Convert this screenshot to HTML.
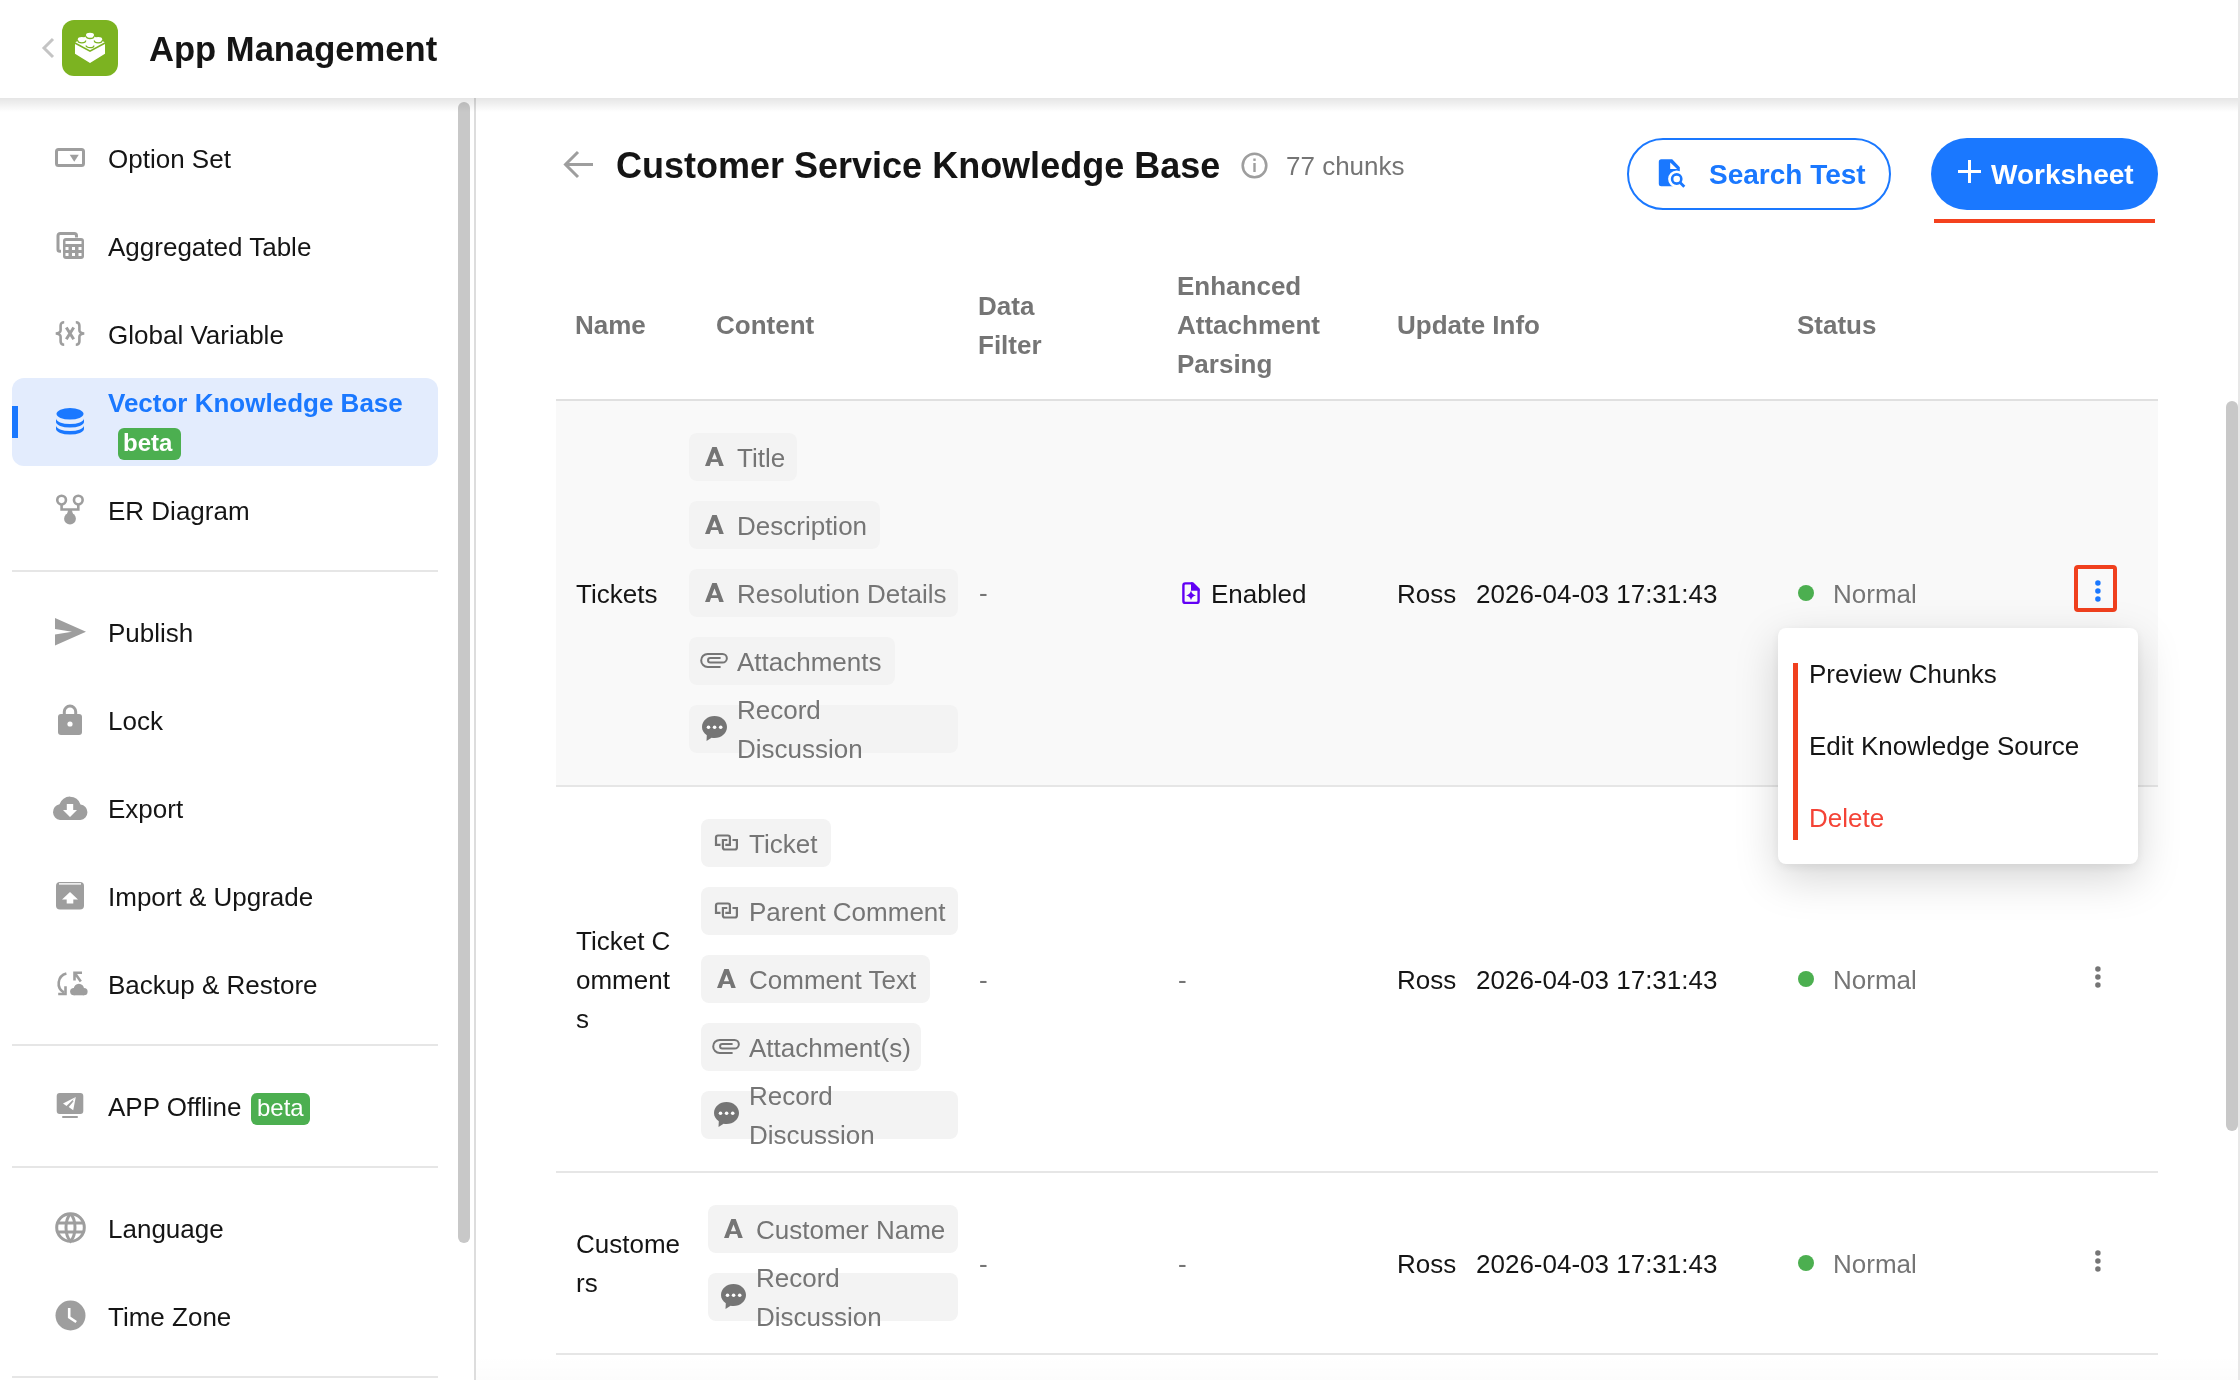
<!DOCTYPE html>
<html><head><meta charset="utf-8">
<style>
*{box-sizing:border-box;margin:0;padding:0}
body{will-change:transform}
html,body{width:2240px;height:1380px;overflow:hidden;background:#fff;font-family:"Liberation Sans",sans-serif;color:#151515}
.a{position:absolute}
.t{position:absolute;white-space:nowrap;line-height:1}
svg{position:absolute;overflow:visible}
</style></head><body>
<div class="a" style="left:0px;top:98px;width:2238px;height:14px;z-index:3;background:linear-gradient(rgba(0,0,0,0.1),rgba(0,0,0,0))"></div>
<svg style="left:40px;top:37px" width="16" height="22" viewBox="0 0 16 22"><path d="M13 2 L4 11 L13 20" fill="none" stroke="#c4c4c4" stroke-width="3"/></svg>
<div class="a" style="left:62px;top:20px;width:56px;height:56px;border-radius:12px;background:#7cb321"></div>
<svg style="left:70px;top:28px" width="40" height="40" viewBox="0 0 40 40"><path d="M5 16.1 L20 24.1 L35 16.1 V25.8 L20 35 L5 25.8 Z" fill="#fff"/><path d="M5.3 14.2 L20 6.2 L34.7 14.2 L20 22.2 Z" fill="#fff"/><ellipse cx="11.8" cy="11.4" rx="4" ry="2.3" fill="#fff"/><path d="M7.9 12.6 A3.9 2.3 0 0 0 15.700000000000001 12.6" fill="none" stroke="#7cb321" stroke-width="1.3"/><ellipse cx="28.2" cy="11.4" rx="4" ry="2.3" fill="#fff"/><path d="M24.3 12.6 A3.9 2.3 0 0 0 32.1 12.6" fill="none" stroke="#7cb321" stroke-width="1.3"/><ellipse cx="20" cy="16.2" rx="4" ry="2.3" fill="#fff"/><path d="M16.1 17.4 A3.9 2.3 0 0 0 23.9 17.4" fill="none" stroke="#7cb321" stroke-width="1.3"/><ellipse cx="20" cy="7" rx="4" ry="2.3" fill="#fff"/><path d="M16.1 8.2 A3.9 2.3 0 0 0 23.9 8.2" fill="none" stroke="#7cb321" stroke-width="1.3"/></svg>
<div class="t" style="left:149px;top:32px;font-size:34.6px;font-weight:700">App Management</div>
<div class="a" style="left:474px;top:98px;width:2px;height:1282px;background:#dddddd"></div>
<div class="a" style="left:458px;top:102px;width:12px;height:1141px;border-radius:6px;background:#c8c8c8"></div>
<div class="a" style="left:12px;top:570px;width:426px;height:2px;background:#e6e6e6"></div>
<div class="a" style="left:12px;top:1044px;width:426px;height:2px;background:#e6e6e6"></div>
<div class="a" style="left:12px;top:1166px;width:426px;height:2px;background:#e6e6e6"></div>
<div class="a" style="left:12px;top:1376px;width:426px;height:2px;background:#e6e6e6"></div>
<div class="a" style="left:12px;top:378px;width:426px;height:88px;border-radius:12px;background:#e3ecfd"></div>
<div class="a" style="left:12px;top:406px;width:6px;height:32px;background:#1a78ff"></div>
<div class="t" style="left:108px;top:146px;font-size:26px">Option Set</div>
<div class="t" style="left:108px;top:234px;font-size:26px">Aggregated Table</div>
<div class="t" style="left:108px;top:322px;font-size:26px">Global Variable</div>
<div class="t" style="left:108px;top:498px;font-size:26px">ER Diagram</div>
<div class="t" style="left:108px;top:620px;font-size:26px">Publish</div>
<div class="t" style="left:108px;top:708px;font-size:26px">Lock</div>
<div class="t" style="left:108px;top:796px;font-size:26px">Export</div>
<div class="t" style="left:108px;top:884px;font-size:26px">Import &amp; Upgrade</div>
<div class="t" style="left:108px;top:972px;font-size:26px">Backup &amp; Restore</div>
<div class="t" style="left:108px;top:1094px;font-size:26px">APP Offline</div>
<div class="t" style="left:108px;top:1216px;font-size:26px">Language</div>
<div class="t" style="left:108px;top:1304px;font-size:26px">Time Zone</div>
<div class="t" style="left:108px;top:390px;font-size:26px;font-weight:700;color:#1a78ff">Vector Knowledge Base</div>
<div class="a" style="left:118px;top:428px;width:63px;height:32px;border-radius:6px;background:#4caf50"></div>
<div class="t" style="left:123px;top:431px;font-size:24px;font-weight:700;color:#fff">beta</div>
<div class="a" style="left:251px;top:1093px;width:59px;height:32px;border-radius:6px;background:#4caf50"></div>
<div class="t" style="left:257px;top:1096px;font-size:24px;color:#fff">beta</div>
<svg style="left:55px;top:148px" width="30" height="19" viewBox="0 0 30 19"><rect x="1.5" y="1.5" width="27" height="16" rx="2" fill="none" stroke="#9e9e9e" stroke-width="3"/><path d="M14.7 6.8 H23.8 L19.25 13.7 Z" fill="#9e9e9e"/></svg>
<svg style="left:56px;top:232px" width="28" height="28" viewBox="0 0 28 28"><path d="M5 19.3 H3.7 A1.7 1.7 0 0 1 2 17.6 V3.7 A2.2 2.2 0 0 1 4.2 1.5 H18.3 A2.2 2.2 0 0 1 20.5 3.7 V5.5" fill="none" stroke="#9e9e9e" stroke-width="3"/><rect x="7" y="6" width="21" height="21" rx="3" fill="#9e9e9e"/><g fill="#fff"><rect x="9.5" y="9" width="16" height="3"/><rect x="9.5" y="15" width="3" height="3"/><rect x="16" y="15" width="3" height="3"/><rect x="22.5" y="15" width="3" height="3"/><rect x="9.5" y="21" width="3" height="3"/><rect x="16" y="21" width="3" height="3"/><rect x="22.5" y="21" width="3" height="3"/></g></svg>
<svg style="left:54px;top:320px" width="32" height="28" viewBox="0 0 32 28"><g fill="none" stroke="#9e9e9e" stroke-width="2.6"><path d="M10.2 2.3 C7.8 2.3 6.6 3.5 6.6 5.8 V10.3 C6.6 12.2 5 13.2 1.8 13.5 C5 13.8 6.6 14.8 6.6 16.7 V21.2 C6.6 23.5 7.8 24.7 10.2 24.7"/><path d="M21.8 2.3 C24.2 2.3 25.4 3.5 25.4 5.8 V10.3 C25.4 12.2 27 13.2 30.2 13.5 C27 13.8 25.4 14.8 25.4 16.7 V21.2 C25.4 23.5 24.2 24.7 21.8 24.7"/></g><path d="M12.3 7.5 L19.7 19.3 M19.7 7.5 L12.3 19.3" stroke="#9e9e9e" stroke-width="3"/></svg>
<svg style="left:56px;top:408px" width="28" height="27" viewBox="0 0 28 27"><g fill="#1a78ff"><ellipse cx="14" cy="5.8" rx="13.5" ry="5.8"/><path d="M0 10.5 A14 5.5 0 0 0 28 10.5 V14 A14 5.5 0 0 1 0 14 Z"/><path d="M0 17.5 A14 5.5 0 0 0 28 17.5 V21 A14 5.5 0 0 1 0 21 Z"/></g></svg>
<svg style="left:56px;top:494px" width="30" height="32" viewBox="0 0 30 32"><g fill="none" stroke="#9e9e9e" stroke-width="2.6"><circle cx="5.6" cy="6.1" r="4.35"/><circle cx="22.3" cy="6.1" r="4.35"/><path d="M5.6 10.4 V15.5 H22.3 V10.4"/></g><path d="M12.2 16 H15.8 L17 20 H11 Z" fill="#9e9e9e"/><circle cx="14" cy="24.7" r="5.9" fill="#9e9e9e"/></svg>
<svg style="left:55px;top:618px" width="32" height="28" viewBox="0 0 32 28"><path d="M0 0 L31 13.7 L0 27.4 L0 16.5 L17 13.7 L0 10.9 Z" fill="#9e9e9e"/></svg>
<svg style="left:58px;top:699px" width="24" height="36" viewBox="0 0 24 36"><path d="M6.3 17 V12.8 A5.7 5.7 0 0 1 17.7 12.8 V17" fill="none" stroke="#9e9e9e" stroke-width="3"/><rect x="0" y="15" width="24" height="21" rx="3" fill="#9e9e9e"/><circle cx="12" cy="25" r="2.6" fill="#fff"/></svg>
<svg style="left:52px;top:795px" width="36" height="25" viewBox="0 0 36 25"><path d="M8 25 A8 8 0 0 1 7.5 9.2 A11 11 0 0 1 28.5 9.5 A7.8 7.8 0 0 1 28.5 25 Z" fill="#9e9e9e"/><path d="M14.8 9 H21.2 V15 H25 L18 22 L11 15 H14.8 Z" fill="#fff"/></svg>
<svg style="left:56px;top:882px" width="28" height="28" viewBox="0 0 28 28"><rect x="0" y="0" width="28" height="27.5" rx="4" fill="#9e9e9e"/><rect x="3" y="1.2" width="22" height="1.4" fill="#fff"/><path d="M14 10 L22 17.5 H17.3 V21.5 H10.7 V17.5 H6 Z" fill="#fff"/></svg>
<svg style="left:50px;top:962px" width="40" height="40" viewBox="0 0 40 40"><g fill="none" stroke="#9e9e9e" stroke-width="2.6"><path d="M16.4 11.5 A10.3 10.3 0 0 0 14 30.5"/><path d="M8.2 32 H15.5 V24.2"/><path d="M32 10.7 H24.5 V18.5 M24.8 11 L30.8 19.5"/></g><g fill="#9e9e9e"><circle cx="23.8" cy="29.6" r="3.7"/><circle cx="28.9" cy="26.9" r="5.2"/><circle cx="34" cy="29.7" r="3.6"/><rect x="23.8" y="27" width="10.2" height="6.3"/></g></svg>
<svg style="left:56px;top:1093px" width="28" height="26" viewBox="0 0 28 26"><rect x="0.7" y="0" width="26.6" height="21" rx="3" fill="#9e9e9e"/><rect x="6" y="22.9" width="16" height="2.1" rx="1" fill="#9e9e9e"/><path d="M19.8 3.9 L7 10.6 L10.5 12.9 L17.2 6.6 Z" fill="#fff"/><path d="M19.8 3.9 L17.2 17.2 L12.7 14.1 L18.2 7.4 Z M17.2 6.6 L19.8 3.9 L18.2 7.4 L16.6 8.4 Z" fill="#fff"/></svg>
<svg style="left:54.5px;top:1212px" width="31" height="31" viewBox="0 0 31 31"><g fill="none" stroke="#9e9e9e" stroke-width="3"><circle cx="15.5" cy="15.5" r="13.8"/><path d="M2 11 H29 M2 20 H29"/><path d="M15.5 1.7 C9.5 8 9.5 23 15.5 29.3 C21.5 23 21.5 8 15.5 1.7"/></g></svg>
<svg style="left:55px;top:1300px" width="31" height="31" viewBox="0 0 31 31"><circle cx="15.5" cy="15.5" r="15" fill="#9e9e9e"/><path d="M14.2 8 V17.3 L21.2 22" fill="none" stroke="#fff" stroke-width="2.6"/></svg>
<svg style="left:563px;top:150px" width="30" height="29" viewBox="0 0 30 29"><path d="M15 2 L2.5 14.5 L15 27 M2.5 14.5 H30" fill="none" stroke="#9e9e9e" stroke-width="3"/></svg>
<div class="t" style="left:616px;top:148px;font-size:36px;font-weight:700">Customer Service Knowledge Base</div>
<svg style="left:1241px;top:152px" width="27" height="27" viewBox="0 0 27 27"><circle cx="13.5" cy="13.5" r="11.8" fill="none" stroke="#9e9e9e" stroke-width="2.6"/><rect x="12.3" y="6.5" width="2.4" height="2.4" fill="#9e9e9e"/><rect x="12.3" y="11" width="2.4" height="9" fill="#9e9e9e"/></svg>
<div class="t" style="left:1286px;top:153px;font-size:26px;color:#757575">77 chunks</div>
<div class="a" style="left:1627px;top:138px;width:264px;height:72px;border:2px solid #1a78ff;border-radius:36px"></div>
<svg style="left:1658px;top:159px" width="30" height="30" viewBox="0 0 30 30"><path d="M0.8 2.8 A2.5 2.5 0 0 1 3.3 0.3 H14.2 L21.8 8.3 V24.7 A2.5 2.5 0 0 1 19.3 27.2 H3.3 A2.5 2.5 0 0 1 0.8 24.7 Z" fill="#1a78ff"/><path d="M12.2 3.4 V9.9 H19.1 Z" fill="#fff"/><circle cx="18.7" cy="20" r="8.6" fill="#fff"/><circle cx="18.7" cy="20" r="4.6" fill="none" stroke="#1a78ff" stroke-width="2.6"/><path d="M21.8 23.2 L26.3 27.7" stroke="#1a78ff" stroke-width="2.8"/></svg>
<div class="t" style="left:1709px;top:161px;font-size:28px;font-weight:700;color:#1a78ff">Search Test</div>
<div class="a" style="left:1931px;top:138px;width:227px;height:72px;border-radius:36px;background:#1a78ff"></div>
<svg style="left:1958px;top:160px" width="23" height="23" viewBox="0 0 23 23"><path d="M11.5 0 V23 M0 11.5 H23" stroke="#fff" stroke-width="3"/></svg>
<div class="t" style="left:1991px;top:161px;font-size:28px;font-weight:700;color:#fff">Worksheet</div>
<div class="a" style="left:1934px;top:219px;width:221px;height:4px;background:#f4411e"></div>
<div class="t" style="left:575px;top:312px;font-size:26px;font-weight:700;color:#757575">Name</div>
<div class="t" style="left:716px;top:312px;font-size:26px;font-weight:700;color:#757575">Content</div>
<div class="t" style="left:978px;top:293px;font-size:26px;font-weight:700;color:#757575">Data</div>
<div class="t" style="left:978px;top:332px;font-size:26px;font-weight:700;color:#757575">Filter</div>
<div class="t" style="left:1177px;top:273px;font-size:26px;font-weight:700;color:#757575">Enhanced</div>
<div class="t" style="left:1177px;top:312px;font-size:26px;font-weight:700;color:#757575">Attachment</div>
<div class="t" style="left:1177px;top:351px;font-size:26px;font-weight:700;color:#757575">Parsing</div>
<div class="t" style="left:1397px;top:312px;font-size:26px;font-weight:700;color:#757575">Update Info</div>
<div class="t" style="left:1797px;top:312px;font-size:26px;font-weight:700;color:#757575">Status</div>
<div class="a" style="left:556px;top:399px;width:1602px;height:2px;background:#e0e0e0"></div>
<div class="a" style="left:556px;top:401px;width:1602px;height:384px;background:#f9f9f9"></div>
<div class="a" style="left:556px;top:785px;width:1602px;height:2px;background:#e6e6e6"></div>
<div class="a" style="left:556px;top:1171px;width:1602px;height:2px;background:#e6e6e6"></div>
<div class="a" style="left:556px;top:1353px;width:1602px;height:2px;background:#e6e6e6"></div>
<div class="t" style="left:576px;top:581px;font-size:26px">Tickets</div>
<div class="a" style="left:689px;top:433px;width:108px;height:48px;border-radius:8px;background:#f3f3f3"></div>
<svg style="left:705px;top:447px" width="20" height="20" viewBox="0 0 20 20"><path d="M7.3 0 H11.7 L18.8 19 H14.3 L13 15 H6 L4.7 19 H0 Z M9.5 5.6 L12.1 12.3 H6.9 Z" fill="#757575" fill-rule="evenodd"/></svg>
<div class="t" style="left:737px;top:445px;font-size:26px;color:#757575">Title</div>
<div class="a" style="left:689px;top:501px;width:191px;height:48px;border-radius:8px;background:#f3f3f3"></div>
<svg style="left:705px;top:515px" width="20" height="20" viewBox="0 0 20 20"><path d="M7.3 0 H11.7 L18.8 19 H14.3 L13 15 H6 L4.7 19 H0 Z M9.5 5.6 L12.1 12.3 H6.9 Z" fill="#757575" fill-rule="evenodd"/></svg>
<div class="t" style="left:737px;top:513px;font-size:26px;color:#757575">Description</div>
<div class="a" style="left:689px;top:569px;width:269px;height:48px;border-radius:8px;background:#f3f3f3"></div>
<svg style="left:705px;top:583px" width="20" height="20" viewBox="0 0 20 20"><path d="M7.3 0 H11.7 L18.8 19 H14.3 L13 15 H6 L4.7 19 H0 Z M9.5 5.6 L12.1 12.3 H6.9 Z" fill="#757575" fill-rule="evenodd"/></svg>
<div class="t" style="left:737px;top:581px;font-size:26px;color:#757575">Resolution Details</div>
<div class="a" style="left:689px;top:637px;width:206px;height:48px;border-radius:8px;background:#f3f3f3"></div>
<svg style="left:692px;top:645px" width="40" height="30" viewBox="0 0 40 30"><path d="M28.6 21.9 H15.7 A6.5 6.5 0 0 1 15.7 8.9 H30.5 A4.35 4.35 0 0 1 30.5 17.6 H18.3 A2.25 2.25 0 0 1 18.3 13.1 H28.6" fill="none" stroke="#757575" stroke-width="2"/></svg>
<div class="t" style="left:737px;top:649px;font-size:26px;color:#757575">Attachments</div>
<div class="a" style="left:689px;top:705px;width:269px;height:48px;border-radius:8px;background:#f3f3f3"></div>
<svg style="left:695px;top:700px" width="40" height="50" viewBox="0 0 40 50"><path d="M19.5 16 C26.4 16 32 20.9 32 27 C32 33.1 26.4 38 19.5 38 C18.5 38 17.5 37.9 16.6 37.7 L11.5 41 L11.8 35.2 C8.8 33.2 7 30.3 7 27 C7 20.9 12.6 16 19.5 16 Z" fill="#757575"/><circle cx="13.5" cy="27.2" r="1.8" fill="#fff"/><circle cx="19.6" cy="27.2" r="1.8" fill="#fff"/><circle cx="25.7" cy="27.2" r="1.8" fill="#fff"/></svg>
<div class="t" style="left:737px;top:697px;font-size:26px;color:#757575">Record</div>
<div class="t" style="left:737px;top:736px;font-size:26px;color:#757575">Discussion</div>
<div class="t" style="left:979px;top:580px;font-size:26px;color:#757575">-</div>
<svg style="left:1175px;top:575px" width="30" height="32" viewBox="0 0 30 32"><path d="M17.5 8.4 H10.4 A2 2 0 0 0 8.4 10.4 V25.9 A2 2 0 0 0 10.4 27.9 H21.6 A2 2 0 0 0 23.6 25.9 V14.5" fill="none" stroke="#6200f5" stroke-width="2.4"/><path d="M16 7.2 H18.2 L24.8 13.8 V15.7 H16 Z" fill="#6200f5"/><path d="M16 15.5 Q16.8 19.6 21 20.4 Q16.8 21.2 16 25.2 Q15.2 21.2 11 20.4 Q15.2 19.6 16 15.5 Z" fill="#6200f5"/></svg>
<div class="t" style="left:1211px;top:581px;font-size:26px">Enabled</div>
<div class="t" style="left:1397px;top:581px;font-size:26px">Ross</div>
<div class="t" style="left:1476px;top:581px;font-size:26px">2026-04-03 17:31:43</div>
<div class="a" style="left:1798px;top:585px;width:16px;height:16px;border-radius:8px;background:#4caf50"></div>
<div class="t" style="left:1833px;top:581px;font-size:26px;color:#757575">Normal</div>
<div class="t" style="left:1397px;top:967px;font-size:26px">Ross</div>
<div class="t" style="left:1476px;top:967px;font-size:26px">2026-04-03 17:31:43</div>
<div class="a" style="left:1798px;top:971px;width:16px;height:16px;border-radius:8px;background:#4caf50"></div>
<div class="t" style="left:1833px;top:967px;font-size:26px;color:#757575">Normal</div>
<div class="t" style="left:1397px;top:1251px;font-size:26px">Ross</div>
<div class="t" style="left:1476px;top:1251px;font-size:26px">2026-04-03 17:31:43</div>
<div class="a" style="left:1798px;top:1255px;width:16px;height:16px;border-radius:8px;background:#4caf50"></div>
<div class="t" style="left:1833px;top:1251px;font-size:26px;color:#757575">Normal</div>
<div class="a" style="left:2074px;top:565px;width:43px;height:47px;border:4px solid #f0401e;border-radius:4px"></div>
<svg style="left:2090px;top:575px" width="16" height="32" viewBox="0 0 16 32"><circle cx="7.9" cy="8" r="2.75" fill="#1a78ff"/><circle cx="7.9" cy="16" r="2.75" fill="#1a78ff"/><circle cx="7.9" cy="24" r="2.75" fill="#1a78ff"/></svg>
<svg style="left:2090px;top:961px" width="16" height="32" viewBox="0 0 16 32"><circle cx="7.9" cy="8" r="2.75" fill="#757575"/><circle cx="7.9" cy="16" r="2.75" fill="#757575"/><circle cx="7.9" cy="24" r="2.75" fill="#757575"/></svg>
<svg style="left:2090px;top:1245px" width="16" height="32" viewBox="0 0 16 32"><circle cx="7.9" cy="8" r="2.75" fill="#757575"/><circle cx="7.9" cy="16" r="2.75" fill="#757575"/><circle cx="7.9" cy="24" r="2.75" fill="#757575"/></svg>
<div class="t" style="left:576px;top:928px;font-size:26px">Ticket C</div>
<div class="t" style="left:576px;top:967px;font-size:26px">omment</div>
<div class="t" style="left:576px;top:1006px;font-size:26px">s</div>
<div class="a" style="left:701px;top:819px;width:130px;height:48px;border-radius:8px;background:#f3f3f3"></div>
<svg style="left:705px;top:825px" width="40" height="30" viewBox="0 0 40 30"><g fill="none" stroke="#757575" stroke-width="2.2"><path d="M15.5 19.8 H11 V12.5 A2 2 0 0 1 13 10.5 H22.9 A2 2 0 0 1 24.9 12.5 V19.8 H20.3"/><path d="M22.3 15 H17.9 V22.5 A2 2 0 0 0 19.9 24.5 H29.9 A2 2 0 0 0 31.9 22.5 V15 H27.5"/></g></svg>
<div class="t" style="left:749px;top:831px;font-size:26px;color:#757575">Ticket</div>
<div class="a" style="left:701px;top:887px;width:257px;height:48px;border-radius:8px;background:#f3f3f3"></div>
<svg style="left:705px;top:893px" width="40" height="30" viewBox="0 0 40 30"><g fill="none" stroke="#757575" stroke-width="2.2"><path d="M15.5 19.8 H11 V12.5 A2 2 0 0 1 13 10.5 H22.9 A2 2 0 0 1 24.9 12.5 V19.8 H20.3"/><path d="M22.3 15 H17.9 V22.5 A2 2 0 0 0 19.9 24.5 H29.9 A2 2 0 0 0 31.9 22.5 V15 H27.5"/></g></svg>
<div class="t" style="left:749px;top:899px;font-size:26px;color:#757575">Parent Comment</div>
<div class="a" style="left:701px;top:955px;width:229px;height:48px;border-radius:8px;background:#f3f3f3"></div>
<svg style="left:717px;top:969px" width="20" height="20" viewBox="0 0 20 20"><path d="M7.3 0 H11.7 L18.8 19 H14.3 L13 15 H6 L4.7 19 H0 Z M9.5 5.6 L12.1 12.3 H6.9 Z" fill="#757575" fill-rule="evenodd"/></svg>
<div class="t" style="left:749px;top:967px;font-size:26px;color:#757575">Comment Text</div>
<div class="a" style="left:701px;top:1023px;width:220px;height:48px;border-radius:8px;background:#f3f3f3"></div>
<svg style="left:704px;top:1031px" width="40" height="30" viewBox="0 0 40 30"><path d="M28.6 21.9 H15.7 A6.5 6.5 0 0 1 15.7 8.9 H30.5 A4.35 4.35 0 0 1 30.5 17.6 H18.3 A2.25 2.25 0 0 1 18.3 13.1 H28.6" fill="none" stroke="#757575" stroke-width="2"/></svg>
<div class="t" style="left:749px;top:1035px;font-size:26px;color:#757575">Attachment(s)</div>
<div class="a" style="left:701px;top:1091px;width:257px;height:48px;border-radius:8px;background:#f3f3f3"></div>
<svg style="left:707px;top:1086px" width="40" height="50" viewBox="0 0 40 50"><path d="M19.5 16 C26.4 16 32 20.9 32 27 C32 33.1 26.4 38 19.5 38 C18.5 38 17.5 37.9 16.6 37.7 L11.5 41 L11.8 35.2 C8.8 33.2 7 30.3 7 27 C7 20.9 12.6 16 19.5 16 Z" fill="#757575"/><circle cx="13.5" cy="27.2" r="1.8" fill="#fff"/><circle cx="19.6" cy="27.2" r="1.8" fill="#fff"/><circle cx="25.7" cy="27.2" r="1.8" fill="#fff"/></svg>
<div class="t" style="left:749px;top:1083px;font-size:26px;color:#757575">Record</div>
<div class="t" style="left:749px;top:1122px;font-size:26px;color:#757575">Discussion</div>
<div class="t" style="left:979px;top:967px;font-size:26px;color:#757575">-</div>
<div class="t" style="left:1178px;top:967px;font-size:26px;color:#757575">-</div>
<div class="t" style="left:576px;top:1231px;font-size:26px">Custome</div>
<div class="t" style="left:576px;top:1270px;font-size:26px">rs</div>
<div class="a" style="left:708px;top:1205px;width:250px;height:48px;border-radius:8px;background:#f3f3f3"></div>
<svg style="left:724px;top:1219px" width="20" height="20" viewBox="0 0 20 20"><path d="M7.3 0 H11.7 L18.8 19 H14.3 L13 15 H6 L4.7 19 H0 Z M9.5 5.6 L12.1 12.3 H6.9 Z" fill="#757575" fill-rule="evenodd"/></svg>
<div class="t" style="left:756px;top:1217px;font-size:26px;color:#757575">Customer Name</div>
<div class="a" style="left:708px;top:1273px;width:250px;height:48px;border-radius:8px;background:#f3f3f3"></div>
<svg style="left:714px;top:1268px" width="40" height="50" viewBox="0 0 40 50"><path d="M19.5 16 C26.4 16 32 20.9 32 27 C32 33.1 26.4 38 19.5 38 C18.5 38 17.5 37.9 16.6 37.7 L11.5 41 L11.8 35.2 C8.8 33.2 7 30.3 7 27 C7 20.9 12.6 16 19.5 16 Z" fill="#757575"/><circle cx="13.5" cy="27.2" r="1.8" fill="#fff"/><circle cx="19.6" cy="27.2" r="1.8" fill="#fff"/><circle cx="25.7" cy="27.2" r="1.8" fill="#fff"/></svg>
<div class="t" style="left:756px;top:1265px;font-size:26px;color:#757575">Record</div>
<div class="t" style="left:756px;top:1304px;font-size:26px;color:#757575">Discussion</div>
<div class="t" style="left:979px;top:1251px;font-size:26px;color:#757575">-</div>
<div class="t" style="left:1178px;top:1251px;font-size:26px;color:#757575">-</div>
<div class="a" style="left:1778px;top:628px;width:360px;height:236px;border-radius:8px;background:#fff;box-shadow:0 14px 44px rgba(0,0,0,0.17),0 3px 8px rgba(0,0,0,0.06)"></div>
<div class="a" style="left:1793px;top:663px;width:5px;height:177px;background:#f0401e"></div>
<div class="t" style="left:1809px;top:661px;font-size:26px">Preview Chunks</div>
<div class="t" style="left:1809px;top:733px;font-size:26px">Edit Knowledge Source</div>
<div class="t" style="left:1809px;top:805px;font-size:26px;color:#f44336">Delete</div>
<div class="a" style="left:2238px;top:0px;width:2px;height:1380px;background:#e8e8e8"></div>
<div class="a" style="left:2226px;top:401px;width:12px;height:730px;border-radius:6px;background:#c8c8c8"></div>
<div class="a" style="left:476px;top:1355px;width:1762px;height:25px;background:linear-gradient(rgba(255,255,255,0),rgba(0,0,0,0.012))"></div>
</body></html>
